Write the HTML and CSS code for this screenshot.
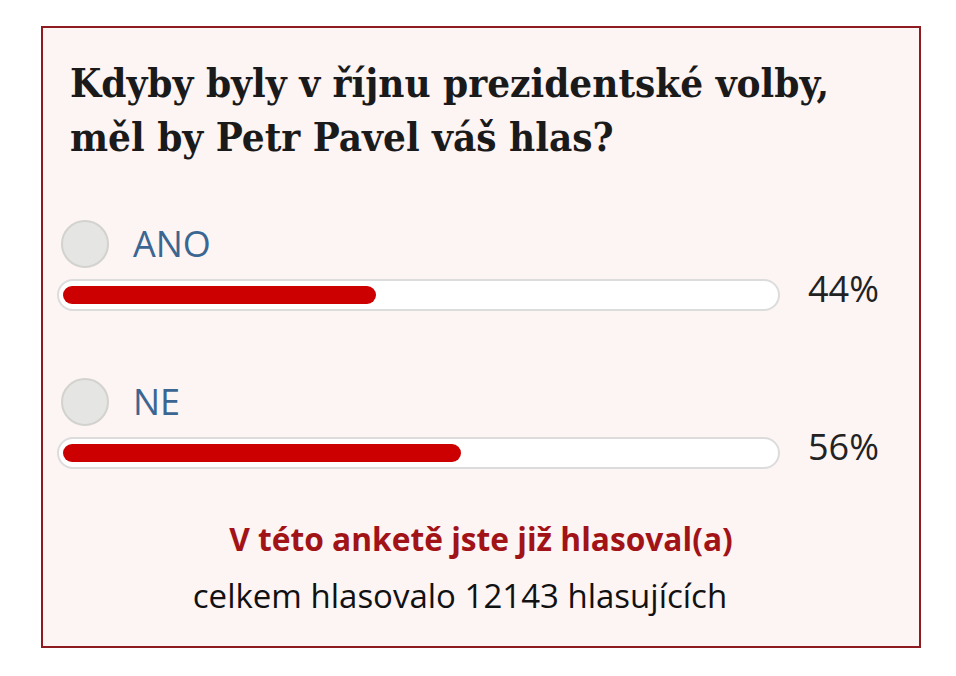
FILE: index.html
```html
<!DOCTYPE html>
<html lang="cs">
<head>
    <meta charset="UTF-8">
    <meta name="viewport" content="width=device-width, initial-scale=1.0">
    <title>Anketa</title>
    <link rel="stylesheet" href="styles.css">
</head>
<body>
    <div class="poll">
        <h2 class="question">Kdyby byly v říjnu prezidentské volby,<br>měl by Petr Pavel váš hlas?</h2>

        <div class="option">
            <div class="option-head">
                <span class="radio"></span>
                <span class="label">ANO</span>
            </div>
            <div class="result">
                <div class="track"><div class="fill" style="width: 44%;"></div></div>
                <span class="percent">44%</span>
            </div>
        </div>

        <div class="option">
            <div class="option-head">
                <span class="radio"></span>
                <span class="label">NE</span>
            </div>
            <div class="result">
                <div class="track"><div class="fill" style="width: 56%;"></div></div>
                <span class="percent">56%</span>
            </div>
        </div>

        <p class="voted">V této anketě jste již hlasoval(a)</p>
        <p class="total">celkem hlasovalo 12143 hlasujících</p>
    </div>
</body>
</html>
```

FILE: styles.css
```css
* {
    margin: 0;
    padding: 0;
    box-sizing: border-box;
}

body {
    background: #fff;
    font-family: 'Open Sans', sans-serif;
}

.poll {
    margin: 26px 0 0 41px;
    width: 880px;
    height: 622px;
    border: 2px solid #8e1b1f;
    background: #fdf4f4;
    padding: 28px 0 0 14px;
}

.question {
    font-family: 'DejaVu Serif', serif;
    font-stretch: condensed;
    font-weight: bold;
    font-size: 40px;
    line-height: 54px;
    color: #1a1a1a;
    margin-left: 13px;
    white-space: nowrap;
}

.option {
    margin-top: 56px;
}

.option + .option {
    margin-top: 67px;
}

.option-head {
    display: flex;
    align-items: center;
    gap: 24px;
    height: 48px;
    padding-left: 4px;
}

.radio {
    width: 48px;
    height: 48px;
    border-radius: 50%;
    background: #e5e5e3;
    border: 2px solid #d2d2ce;
}

.label {
    font-size: 36px;
    line-height: 40px;
    color: #3b6691;
}

.result {
    display: flex;
    align-items: center;
    margin-top: 11px;
}

.track {
    width: 723px;
    height: 32px;
    border: 2px solid #dcdcdc;
    border-radius: 16px;
    background: #fff;
    padding: 5px 4px;
}

.fill {
    height: 18px;
    border-radius: 9px;
    background: #cc0000;
}

.percent {
    margin-left: 28px;
    margin-top: -12px;
    font-size: 36px;
    line-height: 32px;
    color: #222;
}

.voted {
    margin-top: 48px;
    text-align: center;
    font-size: 31.7px;
    line-height: 44px;
    font-weight: bold;
    color: #a11316;
    margin-right: 14px;
}

.total {
    margin-top: 12px;
    text-align: center;
    font-size: 33px;
    line-height: 45px;
    color: #111;
    margin-right: 56px;
}
```
